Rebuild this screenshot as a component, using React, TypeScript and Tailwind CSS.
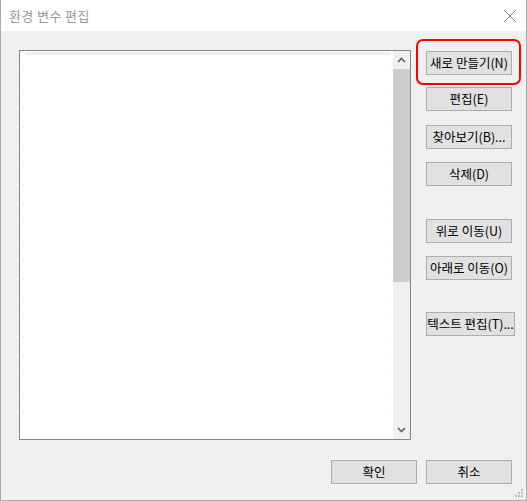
import React from "react";

const font = { fontFamily: '"Noto Sans CJK KR", "Noto Sans", sans-serif' };

function Btn({ label, w = "w-[86px]", className = "" }: { label: string; w?: string; className?: string }) {
  return (
    <div
      className={`${w} h-[24px] border border-[#adadad] bg-[#e1e1e1] flex items-center justify-center text-[12.5px] text-black leading-none whitespace-nowrap ${className}`}
    >
      {label}
    </div>
  );
}

export default function App() {
  const ticks = [70, 89, 108, 127, 146, 165, 184, 203, 222, 241, 260, 279, 298, 317, 336, 355, 374, 393, 412];
  return (
    <div className="relative w-[527px] h-[501px] flex flex-col border-x border-b border-[#aaaaaa] bg-[#f0f0f0]" style={font}>
      <div className="h-[31px] bg-white flex items-center justify-between pl-[8px] pr-[8px] shrink-0">
        <span className="text-[13px] text-[#999999] tracking-[0.4px]">환경 변수 편집</span>
        <svg width="14" height="14" viewBox="0 0 14 14" className="mr-[1px]">
          <path d="M1 1 L13 13 M13 1 L1 13" stroke="#8a8a8a" strokeWidth="1" />
        </svg>
      </div>
      <div className="flex-1 flex flex-col pl-[18px] pt-[19px]">
        <div className="flex">
          <div className="relative w-[392px] h-[390px] border border-[#828790] bg-white flex">
            <div className="flex-1 relative">
              <div className="absolute left-[5px] right-[2px] top-[1px] h-[3px] bg-[#f0f0f0]" />
              {ticks.map((t) => (
                <div key={t} className="absolute left-[2px] w-[2px] h-px bg-[#ececec]" style={{ top: t - 51 }} />
              ))}
              {ticks.map((t) => (
                <div key={"r" + t} className="absolute right-[2px] w-[2px] h-px bg-[#ececec]" style={{ top: t - 51 }} />
              ))}
            </div>
            <div className="w-[17px] flex flex-col bg-[#f0f0f0]">
              <div className="h-[18px] flex items-center justify-center">
                <svg width="9" height="6" viewBox="0 0 9 6">
                  <path d="M1 5 L4.5 1.5 L8 5" stroke="#606060" strokeWidth="1.6" fill="none" />
                </svg>
              </div>
              <div className="h-[213px] bg-[#cdcdcd]" />
              <div className="flex-1" />
              <div className="h-[18px] flex items-center justify-center">
                <svg width="9" height="6" viewBox="0 0 9 6">
                  <path d="M1 1 L4.5 4.5 L8 1" stroke="#606060" strokeWidth="1.6" fill="none" />
                </svg>
              </div>
            </div>
          </div>
          <div className="flex flex-col ml-[15px] pt-[1px]">
            <Btn label="새로 만들기(N)" />
            <Btn label="편집(E)" className="mt-[12px]" />
            <Btn label="찾아보기(B)..." className="mt-[14px]" />
            <Btn label="삭제(D)" className="mt-[13px]" />
            <Btn label="위로 이동(U)" className="mt-[33px]" />
            <Btn label="아래로 이동(O)" className="mt-[13px]" />
            <Btn label="텍스트 편집(T)..." w="w-[89px]" className="mt-[32px]" />
          </div>
        </div>
        <div className="flex justify-end gap-[9px] pr-[14px] mt-[20px]">
          <Btn label="확인" />
          <Btn label="취소" />
        </div>
      </div>
      <div className="absolute left-[415px] top-[39px] w-[105px] h-[46px] border-[2px] border-[#ff0000] rounded-[7px]" />
      <svg className="absolute right-[2px] bottom-[2px]" width="9" height="9" viewBox="0 0 9 9">
        <rect x="6" y="0" width="2" height="2" fill="#bdbdbd" />
        <rect x="3" y="3" width="2" height="2" fill="#bdbdbd" />
        <rect x="6" y="3" width="2" height="2" fill="#bdbdbd" />
        <rect x="0" y="6" width="2" height="2" fill="#bdbdbd" />
        <rect x="3" y="6" width="2" height="2" fill="#bdbdbd" />
        <rect x="6" y="6" width="2" height="2" fill="#bdbdbd" />
      </svg>
    </div>
  );
}
